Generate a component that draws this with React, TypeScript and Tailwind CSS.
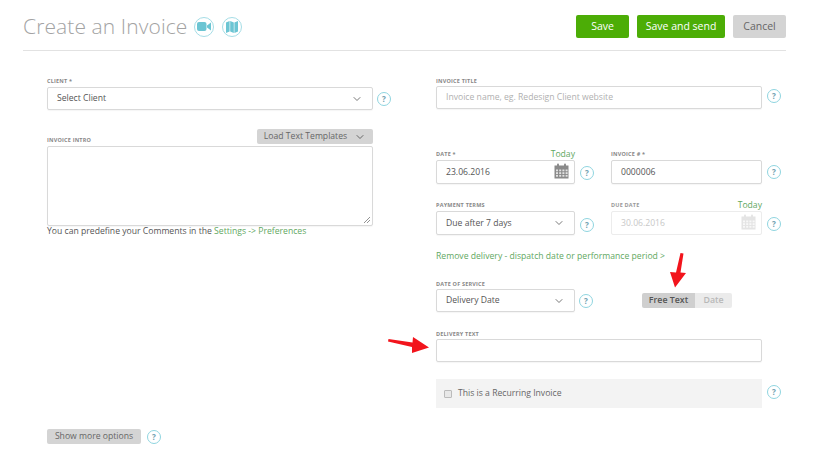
import { ChevronDown } from "lucide-react";

function Help({ className = "" }: { className?: string }) {
  return (
    <span className={`flex h-[14px] w-[14px] shrink-0 items-center justify-center rounded-full border-[1.5px] border-[#8fd5e0] text-[8px] font-bold text-[#6f9fb0] ${className}`}>
      ?
    </span>
  );
}

function Label({ children, className = "" }: { children: React.ReactNode; className?: string }) {
  return <div className={`text-[5.5px] font-bold uppercase leading-[7px] tracking-[0.2px] text-[#888] ${className}`}>{children}</div>;
}

function Calendar({ faded = false }: { faded?: boolean }) {
  const c = faded ? "#e4e4e4" : "#8a8a8a";
  return (
    <svg width="15" height="16" viewBox="0 0 15 16" className="absolute right-[5px] top-[2px]">
      <rect x="0.5" y="2.5" width="14" height="13" fill={c} />
      <rect x="3" y="0.5" width="2" height="4" rx="1" fill={c} />
      <rect x="10" y="0.5" width="2" height="4" rx="1" fill={c} />
      {[6.5, 9.2, 11.9].map((y) =>
        [2, 5.2, 8.4, 11.6].map((x) => <rect key={`${x}-${y}`} x={x} y={y} width="2" height="1.8" fill="#fff" opacity={0.75} />)
      )}
    </svg>
  );
}

function Box({ children, className = "" }: { children?: React.ReactNode; className?: string }) {
  return (
    <div className={`relative flex items-center rounded-[2px] border border-[#d9d9d9] bg-white px-[9px] text-[8.65px] text-[#555] shadow-[0_1px_1px_rgba(0,0,0,0.04)] ${className}`}>
      {children}
    </div>
  );
}

function Chevron({ className = "" }: { className?: string }) {
  return <ChevronDown size={12} strokeWidth={1.6} className={`ml-auto text-[#555] ${className}`} />;
}

export default function App() {
  return (
    <div className="relative h-[459px] w-[815px] overflow-hidden bg-white font-['Open_Sans',sans-serif]">
      {/* Header */}
      <div className="ml-[23px] mr-[29px] flex h-[51px] items-center border-b border-[#e2e2e2] pt-[3px]">
        <h1 className="text-[21px] font-light leading-none tracking-[0.1px] text-[#a3a3a3]">Create an Invoice</h1>
        <span className="ml-[7px] flex h-[20px] w-[20px] items-center justify-center rounded-full border border-[#a5dde6]">
          <svg width="14" height="9" viewBox="0 0 14 9" fill="#6cc5d3">
            <rect x="0" y="0" width="9.5" height="9" rx="2" />
            <path d="M10 3.5 14 0.5V8.5L10 5.5Z" />
          </svg>
        </span>
        <span className="ml-[8px] flex h-[20px] w-[20px] items-center justify-center rounded-full border border-[#a5dde6]">
          <svg width="12" height="12" viewBox="0 0 12 12" fill="#6cc5d3">
            <path d="M0 1.5 3.6 0V10.5L0 12ZM4.2 0 7.8 1.5V12L4.2 10.5ZM8.4 1.5 12 0V10.5L8.4 12Z" />
          </svg>
        </span>
        <div className="ml-auto flex gap-[8px] text-[10.5px]">
          <button className="h-[23px] w-[53px] rounded-[2px] bg-[#4cad06] text-white">Save</button>
          <button className="h-[23px] w-[88px] rounded-[2px] bg-[#4cad06] text-white">Save and send</button>
          <button className="h-[23px] w-[53px] rounded-[2px] bg-[#d4d4d4] text-[#666]">Cancel</button>
        </div>
      </div>

      {/* Form */}
      <div className="flex pl-[47px]">
        {/* Left column */}
        <div className="w-[389px]">
          <Label className="mt-[27px]">Client *</Label>
          <div className="mt-[2px] flex items-center gap-[4px]">
            <Box className="h-[23px] w-[326px]">
              Select Client
              <Chevron />
            </Box>
            <Help />
          </div>

          <div className="mt-[17px] flex h-[17px] w-[326px] items-end justify-between">
            <Label>Invoice intro</Label>
            <button className="flex h-[15px] w-[116px] items-center justify-center gap-[7px] rounded-[2px] bg-[#d4d4d4] text-[8.65px] text-[#666]">
              Load Text Templates
              <ChevronDown size={12} strokeWidth={2} />
            </button>
          </div>
          <Box className="mt-[2px] h-[80px] w-[326px]">
            <svg width="8" height="8" viewBox="0 0 8 8" className="absolute bottom-[1px] right-[1px]" stroke="#777" strokeWidth="0.8">
              <path d="M1 7 7 1M4 7 7 4" />
            </svg>
          </Box>
          <p className="mt-[-1px] text-[8.65px] leading-[13px] text-[#555]">
            You can predefine your Comments in the <span className="text-[#5fa85f]">Settings -&gt; Preferences</span>
          </p>

          <div className="mt-[191px] flex items-center gap-[6px]">
            <button className="h-[15px] w-[94px] rounded-[2px] bg-[#d4d4d4] text-[8.65px] text-[#666]">Show more options</button>
            <Help />
          </div>
        </div>

        {/* Right column */}
        <div className="w-[352px]">
          <Label className="mt-[27px]">Invoice title</Label>
          <div className="mt-[1px] flex items-center gap-[4px]">
            <Box className="h-[23px] w-[326px] text-[#b0b0b0]">Invoice name, eg. Redesign Client website</Box>
            <Help className="ml-[1px] -mt-[3px]" />
          </div>

          <div className="mt-[40px] flex">
            <div className="w-[175px]">
              <div className="flex h-[10px] w-[139px] items-center justify-between">
                <Label>Date *</Label>
                <span className="text-[8.65px] leading-none text-[#5fa85f]">Today</span>
              </div>
              <div className="mt-[1px] flex items-center gap-[5px]">
                <Box className="h-[24px] w-[139px]">
                  23.06.2016
                  <Calendar />
                </Box>
                <Help className="mt-[2px]" />
              </div>
            </div>
            <div>
              <Label className="mt-[2px]">Invoice # *</Label>
              <div className="mt-[2px] flex items-center gap-[4px]">
                <Box className="h-[24px] w-[151px]">0000006</Box>
                <Help className="ml-[1px]" />
              </div>
            </div>
          </div>

          <div className="mt-[16px] flex">
            <div className="w-[175px]">
              <Label className="h-[10px] pt-[2px]">Payment terms</Label>
              <div className="mt-[1px] flex items-center gap-[5px]">
                <Box className="h-[24px] w-[139px]">
                  Due after 7 days
                  <Chevron />
                </Box>
                <Help className="mt-[3px]" />
              </div>
            </div>
            <div>
              <div className="flex h-[10px] w-[151px] items-center justify-between">
                <Label className="text-[#999]">Due date</Label>
                <span className="text-[8.65px] leading-none text-[#5fa85f]">Today</span>
              </div>
              <div className="mt-[1px] flex items-center gap-[4px]">
                <Box className="h-[24px] w-[151px] border-[#ececec] text-[#c8c8c8] shadow-none">
                  30.06.2016
                  <Calendar faded />
                </Box>
                <Help className="ml-[1px] mt-[2px]" />
              </div>
            </div>
          </div>

          <p className="mt-[15px] text-[8.65px] leading-[13px] text-[#5fa85f]">Remove delivery - dispatch date or performance period &gt;</p>

          <Label className="mt-[18px]">Date of service</Label>
          <div className="mt-[1px] flex items-center">
            <Box className="h-[23px] w-[139px]">
              Delivery Date
              <Chevron />
            </Box>
            <Help className="ml-[4px]" />
            <div className="ml-[49px] flex h-[15px] w-[90px] text-[8.8px] font-semibold">
              <span className="flex w-[53px] items-center justify-center rounded-l-[2px] bg-[#cfcfcf] text-[#555]">Free Text</span>
              <span className="flex flex-1 items-center justify-center rounded-r-[2px] bg-[#ebebeb] text-[#b8b8b8]">Date</span>
            </div>
          </div>

          <Label className="mt-[19px]">Delivery text</Label>
          <Box className="mt-[1px] h-[23px] w-[326px]" />

          <div className="mt-[17px] flex items-center gap-[4px]">
            <label className="flex h-[29px] w-[326px] items-center gap-[6px] bg-[#f3f3f3] pl-[8px] text-[8.65px] text-[#666]">
              <span className="h-[8px] w-[8px] rounded-[1px] border border-[#bbb] bg-[#e8e8e8]" />
              This is a Recurring Invoice
            </label>
            <Help className="ml-[1px] -mt-[4px]" />
          </div>
        </div>
      </div>

      {/* Red arrows on top of the form */}
      <svg width="815" height="459" className="pointer-events-none absolute left-0 top-0" fill="#f2141c">
        <path d="M680.5 253 683.5 253.5 680.5 272.5 686 273 675 287.5 670 272 676 272.5Z" />
        <path d="M388 341.5 388.5 339 412.5 342.5 413 337 429 347.5 412 353 412 347Z" />
      </svg>
    </div>
  );
}
